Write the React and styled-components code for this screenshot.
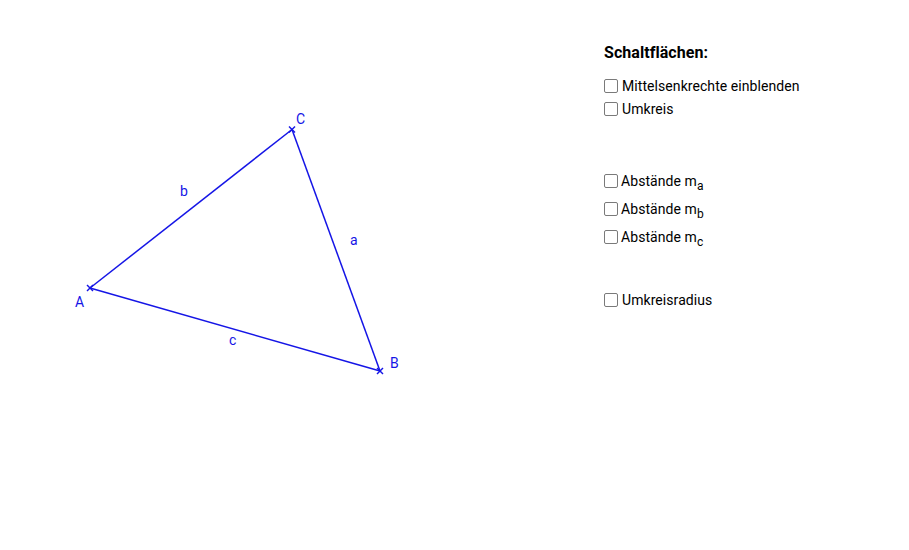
import React from "react";
import styled, { createGlobalStyle } from "styled-components";

const Global = createGlobalStyle`
  html, body { margin: 0; padding: 0; background: #fff; }
  body { font-family: Roboto, "Liberation Sans", sans-serif; color: #000; }
`;

const Stage = styled.div`
  display: flex;
  width: 909px;
  height: 550px;
  background: #fff;
  overflow: hidden;
`;

const Canvas = styled.svg`
  flex: 0 0 604px;
  width: 604px;
  height: 550px;
  display: block;
`;

const Panel = styled.div`
  display: flex;
  flex-direction: column;
  padding-top: 43px;
`;

const Title = styled.div`
  font-size: 16px;
  line-height: 20px;
  font-weight: 700;
  letter-spacing: 0.05px;
  margin-bottom: ${(p) => p.$after}px;
`;

const Group = styled.div`
  display: flex;
  flex-direction: column;
  gap: ${(p) => p.$gap || 0}px;
  margin-bottom: ${(p) => p.$after || 0}px;
`;

const Row = styled.label`
  display: flex;
  align-items: center;
  gap: ${(p) => p.$gap || 4}px;
  height: 23px;
  font-size: 14px;
  line-height: 17px;
  letter-spacing: 0.07px;
`;

const Box = styled.input.attrs({ type: "checkbox" })`
  appearance: none;
  margin: 0;
  width: 14px;
  height: 14px;
  box-sizing: border-box;
  border: 1px solid #7a7a7a;
  border-radius: 2px;
  background: #fff;
`;

const Sub = styled.sub`
  font-size: 12px;
  line-height: 0;
  vertical-align: -4px;
`;

const BLUE = "#1515e6";

const Cross = ({ x, y }) => (
  <g stroke={BLUE} strokeWidth="1.4">
    <line x1={x - 3} y1={y - 3} x2={x + 3} y2={y + 3} />
    <line x1={x - 3} y1={y + 3} x2={x + 3} y2={y - 3} />
  </g>
);

const A = { x: 90, y: 288 };
const B = { x: 380, y: 371 };
const C = { x: 292, y: 129.5 };

export default function App() {
  return (
    <>
      <Global />
      <Stage>
        <Canvas viewBox="0 0 604 550">
          <g stroke={BLUE} strokeWidth="1.5" fill="none">
            <line x1={A.x} y1={A.y} x2={B.x} y2={B.y} />
            <line x1={B.x} y1={B.y} x2={C.x} y2={C.y} />
            <line x1={C.x} y1={C.y} x2={A.x} y2={A.y} />
          </g>
          <Cross {...A} />
          <Cross {...B} />
          <Cross {...C} />
          <g fill={BLUE} fontFamily="Roboto, 'Liberation Sans', sans-serif" fontSize="14">
            <text x="75" y="307">A</text>
            <text x="390" y="368">B</text>
            <text x="296" y="124">C</text>
            <text x="350" y="245">a</text>
            <text x="180" y="196">b</text>
            <text x="229" y="345">c</text>
          </g>
        </Canvas>
        <Panel>
          <Title $after={11.5}>Schaltflächen:</Title>
          <Group $after={49}>
            <Row><Box />Mittelsenkrechte einblenden</Row>
            <Row><Box />Umkreis</Row>
          </Group>
          <Group $gap={5} $after={40}>
            <Row $gap={3}><Box /><span>Abstände m<Sub>a</Sub></span></Row>
            <Row $gap={3}><Box /><span>Abstände m<Sub>b</Sub></span></Row>
            <Row $gap={3}><Box /><span>Abstände m<Sub>c</Sub></span></Row>
          </Group>
          <Group>
            <Row><Box />Umkreisradius</Row>
          </Group>
        </Panel>
      </Stage>
    </>
  );
}
